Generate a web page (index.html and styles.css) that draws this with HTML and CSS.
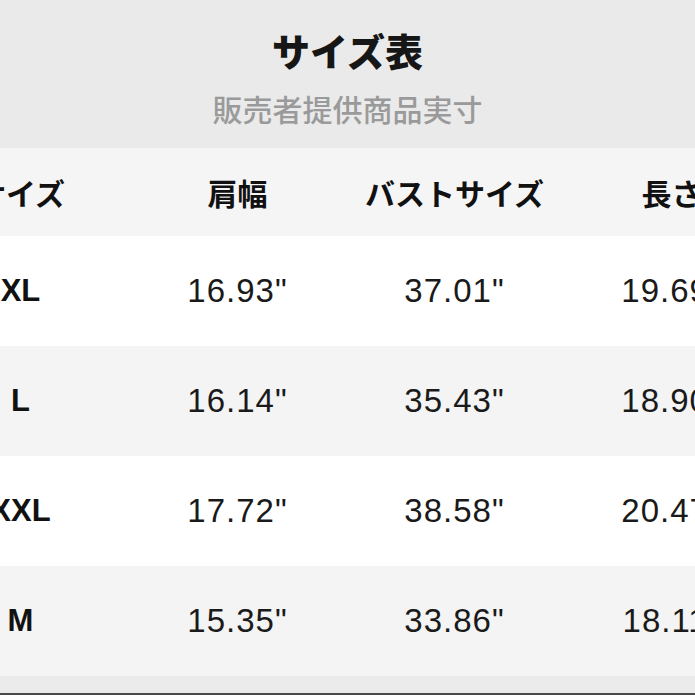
FILE: index.html
```html
<!DOCTYPE html>
<html lang="ja">
<head>
<meta charset="utf-8">
<title>サイズ表</title>
<link rel="stylesheet" href="styles.css">
</head>
<body>
<div class="page">
  <header class="head">
    <h1 class="title">サイズ表</h1>
    <p class="subtitle">販売者提供商品実寸</p>
  </header>
  <div class="table">
    <div class="row row-head">
      <div class="cell">サイズ</div>
      <div class="cell">肩幅</div>
      <div class="cell">バストサイズ</div>
      <div class="cell">長さ</div>
    </div>
    <div class="row row-white">
      <div class="cell size">XL</div>
      <div class="cell num">16.93"</div>
      <div class="cell num">37.01"</div>
      <div class="cell num">19.69"</div>
    </div>
    <div class="row row-grey">
      <div class="cell size">L</div>
      <div class="cell num">16.14"</div>
      <div class="cell num">35.43"</div>
      <div class="cell num">18.90"</div>
    </div>
    <div class="row row-white">
      <div class="cell size">XXL</div>
      <div class="cell num">17.72"</div>
      <div class="cell num">38.58"</div>
      <div class="cell num">20.47"</div>
    </div>
    <div class="row row-grey">
      <div class="cell size">M</div>
      <div class="cell num">15.35"</div>
      <div class="cell num">33.86"</div>
      <div class="cell num">18.11"</div>
    </div>
  </div>
  <div class="foot"></div>
</div>
</body>
</html>
```

FILE: styles.css
```css
html, body {
  margin: 0;
  padding: 0;
}
body {
  background: #eaeaea;
  overflow: hidden;
  width: 695px;
  height: 695px;
  font-family: "Noto Sans CJK JP", "Liberation Sans", sans-serif;
  color: #111;
}
.page {
  display: flex;
  flex-direction: column;
  width: 695px;
  height: 695px;
  overflow: hidden;
}
.head {
  height: 148px;
  box-sizing: border-box;
  padding-top: 29px;
  display: flex;
  flex-direction: column;
  align-items: center;
  background: #eaeaea;
}
.title {
  margin: 0;
  font-size: 38px;
  line-height: 42px;
  font-weight: 900;
  color: #161616;
}
.subtitle {
  margin: 19px 0 0;
  font-size: 30px;
  line-height: 36px;
  font-weight: 500;
  color: #9a9a9a;
}
.table {
  margin-left: -88px;
  display: flex;
  flex-direction: column;
}
.row {
  display: grid;
  grid-template-columns: repeat(4, 217px);
  align-items: center;
  justify-items: center;
}
.row-head {
  height: 88px;
  background: #f5f5f5;
}
.row-white {
  height: 110px;
  background: #ffffff;
}
.row-grey {
  height: 110px;
  background: #f4f4f4;
}
.cell {
  white-space: nowrap;
}
.row-head .cell {
  font-family: "Noto Sans CJK JP", sans-serif;
  font-size: 30px;
  line-height: 36px;
  font-weight: 700;
  color: #111;
}
.size {
  font-family: "Liberation Sans", Arial, sans-serif;
  font-weight: 700;
  font-size: 31px;
  line-height: 36px;
  color: #111;
}
.num {
  font-family: "Liberation Sans", Arial, sans-serif;
  font-weight: 400;
  font-size: 33px;
  line-height: 36px;
  letter-spacing: 1px;
  color: #1a1a1a;
}
.foot {
  flex: 1;
  background: #ebebeb;
  border-bottom: 2px solid #4a4a4a;
}
```
